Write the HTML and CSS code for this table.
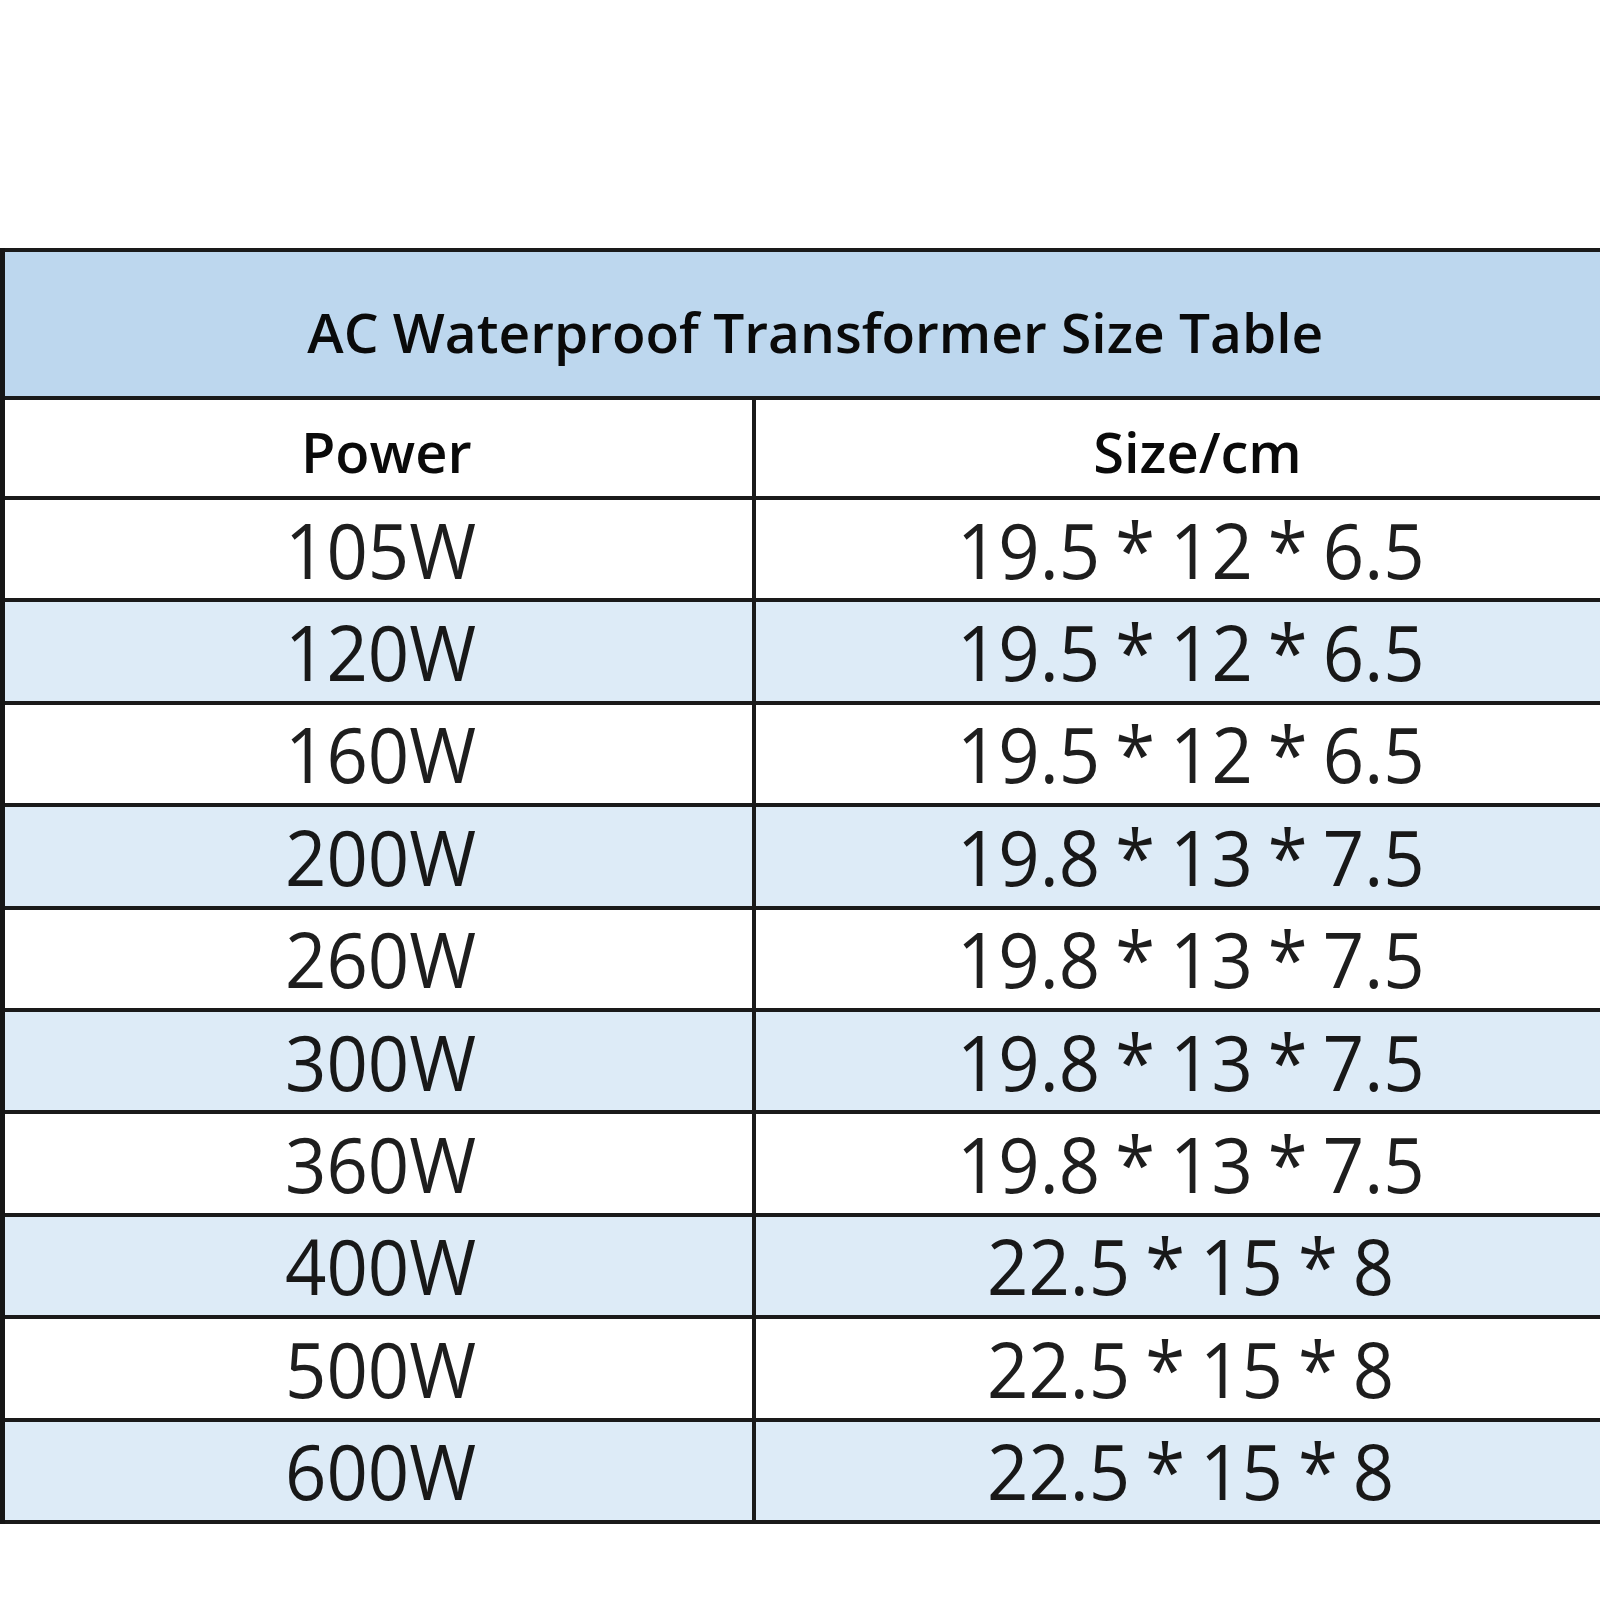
FILE: index.html
```html
<!DOCTYPE html>
<html lang="en">
<head>
<meta charset="utf-8">
<title>AC Waterproof Transformer Size Table</title>
<link rel="stylesheet" href="styles.css">
</head>
<body>
<div class="page">
  <table class="size-table">
    <colgroup>
      <col class="col-power">
      <col class="col-size">
    </colgroup>
    <thead>
      <tr class="title-row">
        <th colspan="2" class="title-cell">AC Waterproof Transformer Size Table</th>
      </tr>
      <tr class="head-row">
        <th class="head-cell head-power">Power</th>
        <th class="head-cell head-size">Size/cm</th>
      </tr>
    </thead>
    <tbody>
      <tr class="row"><td><span class="v">105W</span></td><td><span class="v">19.5 * 12 * 6.5</span></td></tr>
      <tr class="row alt"><td><span class="v">120W</span></td><td><span class="v">19.5 * 12 * 6.5</span></td></tr>
      <tr class="row"><td><span class="v">160W</span></td><td><span class="v">19.5 * 12 * 6.5</span></td></tr>
      <tr class="row alt"><td><span class="v">200W</span></td><td><span class="v">19.8 * 13 * 7.5</span></td></tr>
      <tr class="row"><td><span class="v">260W</span></td><td><span class="v">19.8 * 13 * 7.5</span></td></tr>
      <tr class="row alt"><td><span class="v">300W</span></td><td><span class="v">19.8 * 13 * 7.5</span></td></tr>
      <tr class="row"><td><span class="v">360W</span></td><td><span class="v">19.8 * 13 * 7.5</span></td></tr>
      <tr class="row alt"><td><span class="v">400W</span></td><td><span class="v">22.5 * 15 * 8</span></td></tr>
      <tr class="row"><td><span class="v">500W</span></td><td><span class="v">22.5 * 15 * 8</span></td></tr>
      <tr class="row alt"><td><span class="v">600W</span></td><td><span class="v">22.5 * 15 * 8</span></td></tr>
    </tbody>
  </table>
</div>
</body>
</html>
```
FILE: styles.css
```css
html, body {
  margin: 0;
  padding: 0;
  background: #ffffff;
  overflow: hidden;
}

.page {
  width: 1600px;
  height: 1600px;
  padding-top: 248px;
  box-sizing: border-box;
  overflow: hidden;
}

.size-table {
  border-collapse: collapse;
  table-layout: fixed;
  width: 1625px;
  font-family: "Open Sans", "Noto Sans", sans-serif;
  border-top: 4px solid #161616;
  border-left: 5px solid #161616;
}

.col-power { width: 751px; }
.col-size { width: 874px; }

.size-table th,
.size-table td {
  border: 4px solid #1a1a1a;
  padding: 0;
  text-align: center;
  vertical-align: middle;
}

.title-cell {
  background: #bdd7ee;
  height: 130px;
  padding-top: 14px !important;
  font-size: 55px;
  font-weight: 600;
  color: #0a0a0a;
}

.head-cell {
  background: #ffffff;
  height: 100px;
  font-size: 56px;
  font-weight: 600;
  color: #0a0a0a;
  padding-top: 6px !important;
  box-sizing: border-box;
}

.head-power { padding-left: 16px !important; }
.head-size { padding-left: 14px !important; }

.row td {
  height: 98.4px;
  background: #ffffff;
  color: #1e1e1e;
  font-size: 77px;
  font-weight: 500;
  line-height: 1;
}

.row.alt td {
  background: #ddebf7;
  color: #181818;
}

.row td:first-child {
  padding-left: 4px;
}

.row td:last-child {
  padding-left: 0;
}

.v {
  display: inline-block;
  transform: scaleX(0.94);
  transform-origin: center;
  white-space: pre;
  word-spacing: -4px;
}
```
